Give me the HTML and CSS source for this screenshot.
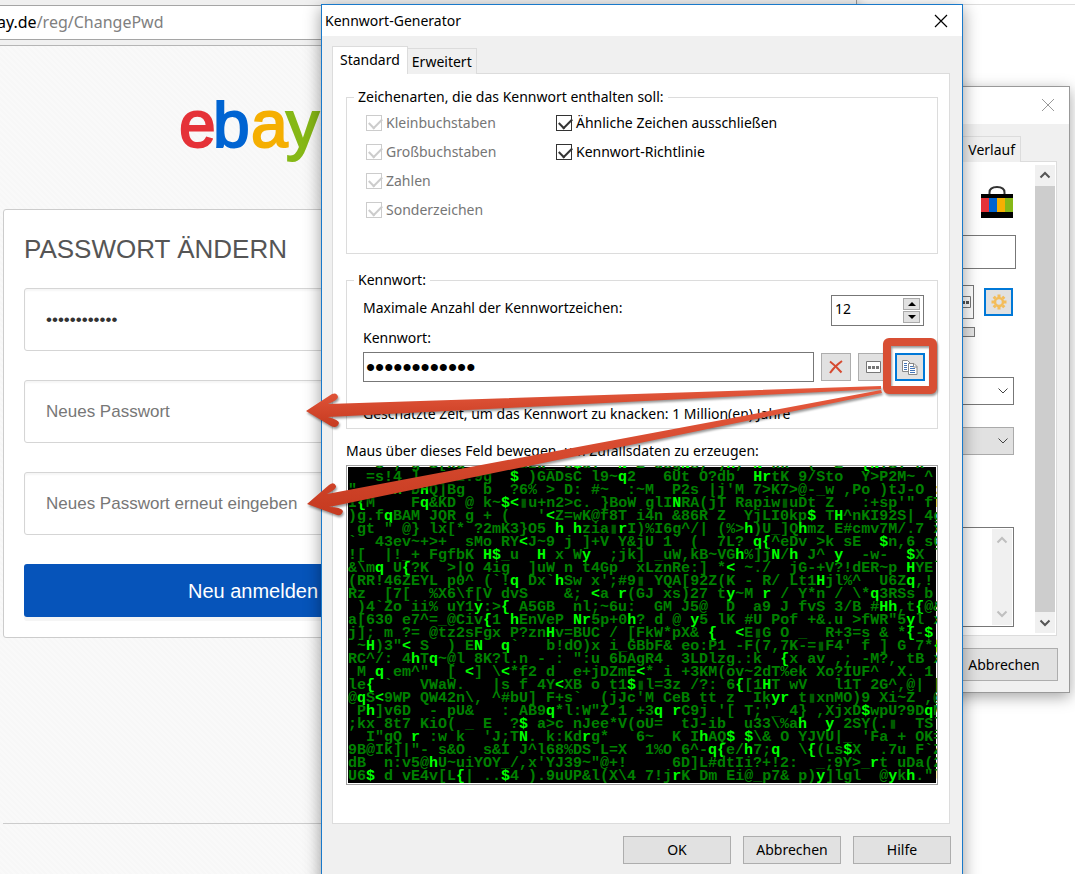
FILE: index.html
```html
<!DOCTYPE html>
<html lang="de">
<head>
    <meta charset="UTF-8">
    <meta name="viewport" content="width=device-width, initial-scale=1.0">
    <title>Kennwort-Generator</title>
    <link rel="stylesheet" href="styles.css">
</head>
<body>
    <!-- Browser -->
    <div class="browser">
        <div class="url-bar"><span class="url"><b>ay.de</b>/reg/ChangePwd</span></div>
        <div class="page">
            <svg class="logo" width="150" height="66" viewBox="0 0 150 66" role="img" aria-label="ebay">
                <text x="-1" y="47" fill="#e53238" stroke="#e53238">e</text>
                <text x="33" y="47" fill="#0064d2" stroke="#0064d2">b</text>
                <text x="71" y="47" fill="#f5af02" stroke="#f5af02">a</text>
                <text x="106" y="47" fill="#86b817" stroke="#86b817">y</text>
            </svg>
            <form class="card">
                <h1>PASSWORT ÄNDERN</h1>
                <input class="field" type="password" value="abcdefghijkl" aria-label="Aktuelles Passwort">
                <input class="field" type="password" placeholder="Neues Passwort" aria-label="Neues Passwort">
                <input class="field" type="password" placeholder="Neues Passwort erneut eingeben" aria-label="Neues Passwort erneut eingeben">
                <button class="submit" type="button">Neu anmelden</button>
            </form>
            <hr class="page-line">
        </div>
    </div>

    <!-- Eintrag bearbeiten -->
    <div class="window entry">
        <div class="entry-title">
            <button class="close" type="button" aria-label="Fenster schließen">
                <svg width="14" height="14" viewBox="0 0 14 14"><path d="M1 1l12 12M13 1L1 13" stroke="#999" fill="none"/></svg>
            </button>
        </div>
        <div class="entry-tabs"><button class="tab" type="button">Verlauf</button></div>
        <div class="entry-panel">
            <div class="entry-form">
                <svg class="bag" width="32" height="32" viewBox="0 0 32 32">
                    <path d="M8.500 9V6.500C8.500 2.500 11 1 16 1s7.500 1.500 7.500 5.500V9" fill="none" stroke="#333" stroke-width="2"/>
                    <path d="M0 8h32v24H0z"/>
                    <path d="M0 12h8v14H0z" fill="#e53238"/>
                    <path d="M8 12h8v14H8z" fill="#0064d2"/>
                    <path d="M16 12h8v14h-8z" fill="#f5af02"/>
                    <path d="M24 12h8v14h-8z" fill="#86b817"/>
                </svg>
                <input class="box" type="text" aria-label="Benutzername">
                <div class="pw-row">
                    <button class="pw-dots" type="button" aria-label="Kennwort anzeigen">
                        <svg width="15" height="12" viewBox="0 0 15 12"><path d="M.5.5h14v11H.5z" fill="#fff" stroke="#777"/><path d="M2 5h3v3H2zM6 5h3v3H6zM10 5h3v3h-3z" fill="#555"/></svg>
                    </button>
                    <button class="gear" type="button" aria-label="Generator">
                        <svg width="16" height="16" viewBox="-8 -8 16 16" stroke="#f3bd5a" fill="none">
                            <circle r="4" stroke-width="2.500"/>
                            <path stroke-width="3" d="M0-5v-2.500M0 5v2.500M-5 0h-2.500M5 0h2.500M3.600-3.600l1.700-1.700M-3.600-3.600l-1.700-1.700M3.600 3.600l1.700 1.700M-3.600 3.600l-1.700 1.700"/>
                        </svg>
                    </button>
                </div>
                <div class="quality"></div>
                <select class="drop" aria-label="Gruppe"><option></option></select>
                <select class="drop grey" aria-label="Ablauf"><option></option></select>
                <div class="note">
                    <textarea aria-label="Kommentar"></textarea>
                    <div class="note-bar">
                        <svg width="12" height="8" viewBox="0 0 12 8"><path d="M1.500 6.500L6 2l4.500 4.500" fill="none" stroke="#bfbfbf" stroke-width="2"/></svg>
                        <svg width="12" height="8" viewBox="0 0 12 8"><path d="M1.500 1.500L6 6l4.500-4.500" fill="none" stroke="#bfbfbf" stroke-width="2"/></svg>
                    </div>
                </div>
            </div>
            <div class="scrollbar">
                <svg width="12" height="8" viewBox="0 0 12 8"><path d="M1.500 6.500L6 2l4.500 4.500" fill="none" stroke="#555" stroke-width="2"/></svg>
                <div class="thumb"></div>
                <svg width="12" height="8" viewBox="0 0 12 8"><path d="M1.500 1.500L6 6l4.500-4.500" fill="none" stroke="#555" stroke-width="2"/></svg>
            </div>
        </div>
        <div class="entry-buttons"><button class="btn" type="button">Abbrechen</button></div>
    </div>

    <!-- Kennwort-Generator -->
    <div class="window dialog">
        <div class="dialog-title">
            <span>Kennwort-Generator</span>
            <button class="close" type="button" aria-label="Schließen">
                <svg width="14" height="14" viewBox="0 0 14 14"><path d="M1 1l12 12M13 1L1 13" stroke="#000" stroke-width="1.200" fill="none"/></svg>
            </button>
        </div>
        <div class="tabs">
            <button class="tab active" type="button">Standard</button>
            <button class="tab" type="button">Erweitert</button>
        </div>
        <div class="panel">
            <fieldset class="kinds">
                <legend>Zeichenarten, die das Kennwort enthalten soll:</legend>
                <div class="checks">
                    <label class="off"><input type="checkbox" checked disabled>Kleinbuchstaben</label>
                    <label><input type="checkbox" checked>Ähnliche Zeichen ausschließen</label>
                    <label class="off"><input type="checkbox" checked disabled>Großbuchstaben</label>
                    <label><input type="checkbox" checked>Kennwort-Richtlinie</label>
                    <label class="off"><input type="checkbox" checked disabled>Zahlen</label>
                    <span></span>
                    <label class="off"><input type="checkbox" checked disabled>Sonderzeichen</label>
                </div>
            </fieldset>

            <fieldset class="password">
                <legend>Kennwort:</legend>
                <div class="count-row">
                    <label for="count">Maximale Anzahl der Kennwortzeichen:</label>
                    <div class="spinner">
                        <input type="text" id="count" value="12">
                        <div class="spin-buttons">
                            <button type="button" aria-label="Mehr"><svg width="8" height="4" viewBox="0 0 8 4"><path d="M0 4l4-4 4 4z"/></svg></button>
                            <button type="button" aria-label="Weniger"><svg width="8" height="4" viewBox="0 0 8 4"><path d="M0 0l4 4 4-4z"/></svg></button>
                        </div>
                    </div>
                </div>
                <label class="pw-label" for="pw">Kennwort:</label>
                <div class="pw-line">
                    <input type="password" id="pw" value="abcdefghijkl">
                    <button class="tool" type="button" aria-label="Löschen">
                        <svg width="16" height="14" viewBox="0 0 16 14"><path d="M2 1.500c4 3 8 7 11.500 11M14 1C9 4.500 5 8.500 2 13" fill="none" stroke="#d64a30" stroke-width="2"/></svg>
                    </button>
                    <button class="tool" type="button" aria-label="Anzeigen">
                        <svg width="15" height="12" viewBox="0 0 15 12"><path d="M.5.5h14v11H.5z" fill="#fff" stroke="#777"/><path d="M2 5h3v3H2zM6 5h3v3H6zM10 5h3v3h-3z" fill="#777"/></svg>
                    </button>
                    <button class="tool copy" type="button" aria-label="Kopieren">
                        <svg width="16" height="15" viewBox="0 0 16 15">
                            <path d="M.5.5h5l3 3v8h-8z" fill="#fff" stroke="#888"/>
                            <path d="M2 3.500h3M2 5.500h3M2 7.500h3M2 9.500h3" stroke="#4475b8"/>
                            <path d="M6.500 3.500h5.500l3 3v8H6.500z" fill="#fff" stroke="#888"/>
                            <path d="M11.500 3.500v3.500H15" fill="none" stroke="#888"/>
                            <path d="M8 6.500h3M8 8.500h5M8 10.500h5M8 12.500h5" stroke="#4475b8"/>
                        </svg>
                    </button>
                </div>
                <p class="crack">Geschätzte Zeit, um das Kennwort zu knacken: 1 Million(en) Jahre</p>
            </fieldset>

            <p class="mouse">Maus über dieses Feld bewegen, um Zufallsdaten zu erzeugen:</p>
            <div class="matrix"><pre id="matrix">
   3 ; g S[xg      uzW_ s$u.  N Z degNs, )h, N kk  (  Z  {NTST k
  =s!4 ]   GZ.9g  $ )GADsC l9~q2   6Ut O?db  HrtK 9/Sto  Y>P2M~ ^
"    h DHQ]Bg  b  ?6% > D: #~  :~M  P2s |j'M 7>K7>@-_w ,Po )tJ-O :
I{M    Fq&amp;KD @ k~$&lt;▮u+n2>c. }BoW glINRA(jT Rapiw▮uDt Z   :+sp'" fT
)g.fqBAM JQR g + (   '&lt;Z=wK@f8T i4n &amp;86R Z  YjLI0kp$ TH^nKI92S| 4g
 gt " @} lx[* ?2mK3}O5 h hzia▮rI)%I6g^/| (%>h)U_]Qhmz E#cmv7M/.7 x
`  43ev~+>+  sMo RY&lt;J~9 j ]+V Y&amp;jU 1` (  7L? q{^eDv >k sE  $n,6 s0
![  |!_+ FgfbK H$_u  H x Wy  ;jk] _uW,kB~VGh%]jN/h J^ y  -w-  $X ]
&amp;\mq U{?K  >|O 4ig  ]uW n t4Gp  xLznRe:] *&lt; ~./  jG-+V?!dER~p HYE
(RR!46ZEYL p0^ (`!q Dx`hSw x';#9▮ YQA[92Z(K - R/ Lt1Hjl%^  U6Zq,!
Rz  [7[  %X6\f[V dvS    &amp;; &lt;a r(GJ xs)27 ty~M r / Y*n / \*q3RSs b
 )4`Zo ii% uY1y:>{ A5GB  nl;~6u:  GM J5@  D  a9 J fvS 3/B #Hh,t{@&amp;
a[630 e7^=_@Civ{1 hEnVeP Nr5p+0h? d @ y5 lK #U Pof +&amp;.u >fWR"5yl x
j]; m ?= @tz2sFgx P?znHv=BUC / [FkW*pX&amp; {  &lt;E▮G O _  R+3=s &amp; *{-$
 ~H)3"&lt; S  ) EN  q`   b!dO)x i_GBbF&amp; eo:P1 -F(7,7K-=▮F4' f ] G 7*{
RC^/: 4hTq~@l 8K?l.n - : ":u 6bAgR4  3LDlzg.:k  {x av ,; -M?, tB x
 M q em^"  [ &lt;] \&lt;*f2 d  e+jDZmE&lt;* i +3KM(ov~2dT%ek Xo?IUF^  X. 1
le{ `   VWaW.   |s f 4Y&lt;XB o t1$▮l=3z /?: 6{[1HT wV   l1T 2G^,@| [
@qS&lt;9WP QW42n\, ^#bU] F+s`  (jJc'M CeB tt z  Ikyr t▮xnMO)9 Xi~Z ,@
 Ph]v6D  - pU&amp;   : AB9q*l:W"Z 1 +3q rC9j '[ T;'_ 4} ,XjxD$wpU?9DqM
;kx 8t7 KiO( _ E  ?$ a>c nJee*V(oU=  tJ-ib  u33\%ah  y 2SY(.▮  TS]
  I"gQ r :w k  'J;TN. k:Kdrg*   6~  K IhAQ$ $\&amp; O YJVU|_ 'Fa + OK=
9B@Ik]|"- s&amp;O  s&amp;I J^l68%DS L=X  1%O 6^-q{e/h7;q  \{(Ls$X  .7u F`Z
dB  n:v5@hU~uiYOY_/,x'YJ39~"@+!     6D]L#dtIi?+!2:  _;9Y>_rt uDa(2
U6$ d vE4v[L{| ..$4 ).9uUP&amp;l(X\4 7!jrK Dm Ei@_p7&amp; p)y]lgl  @ykh."l</pre></div>
        </div>
        <div class="dialog-buttons">
            <button class="btn" type="button">OK</button>
            <button class="btn narrow" type="button">Abbrechen</button>
            <button class="btn narrow" type="button">Hilfe</button>
        </div>
    </div>

    <!-- Markierung und Pfeile -->
    <svg class="marks" width="660" height="240" viewBox="300 320 660 240">
        <defs>
            <linearGradient id="red" x1="0" y1="0" x2="0" y2="1">
                <stop offset="0" stop-color="#e5593d"/>
                <stop offset="1" stop-color="#c63a20"/>
            </linearGradient>
        </defs>
        <g class="mark-shadow">
            <path fill="url(#red)" d="M306 411L332 394Q337 392 338 397Q338 400 328 404L881 386V389L328 417Q339 420 339 423Q337 429 331 426Z"/>
            <path fill="url(#red)" d="M307 504L329 485Q334 481 336 486Q337 489 327 494L881 390L882 393L329 507Q341 507 343 511Q342 516 337 515Z"/>
            <rect x="887" y="342" width="46" height="48" rx="2" fill="none" stroke="#d84f34" stroke-width="8"/>
        </g>
    </svg>

    <script>
        // helle Zeichen im Zufallsfeld hervorheben
        const matrix = document.getElementById('matrix');
        const escapeChar = c => c === '<' ? '&lt;' : c === '&' ? '&amp;' : c;
        matrix.innerHTML = matrix.textContent.split('').map(c => {
            if ('hHq${<Nry'.includes(c)) return '<b>' + escapeChar(c) + '</b>';
            if (c === '▮') return '<i>' + c + '</i>';
            return escapeChar(c);
        }).join('');
    </script>
</body>
</html>
```

FILE: styles.css
```css
* {
    box-sizing: border-box;
    margin: 0;
    padding: 0;
}

body {
    position: relative;
    height: 100vh;
    overflow: hidden;
    background: linear-gradient(#fff 4px, #ddd 4px, #ddd 5px, #fff 5px);
    font-family: "Noto Sans", "Open Sans", sans-serif;
    font-size: 14px;
    line-height: 20px;
    color: #000;
}

button, input, select, textarea {
    font: inherit;
    color: inherit;
    outline: none;
}

svg {
    display: block;
    flex: none;
}

/* Browser */
.browser {
    position: absolute;
    top: 0;
    bottom: 0;
    left: 0;
    width: 857px;
    padding-top: 5px;
    background: #f0f0f0;
    border-right: 1px solid #999;
    box-shadow: 0 0 12px rgba(0, 0, 0, 0.3);
}

.url-bar {
    height: 35px;
    background: #fff;
    border-top: 1px solid #a5a5a5;
    border-bottom: 1px solid #a5a5a5;
    font-size: 16px;
    line-height: 33px;
    color: #808080;
}

.url {
    margin-left: -3px;
}

.url b {
    font-weight: normal;
    color: #000;
}

.page {
    height: 100%;
    margin-top: 5px;
    padding: 54px 3px 0;
    border-top: 1px solid #b5b5b5;
    background: #f8f8f8 repeating-linear-gradient(45deg, #f7f7f7 0, #f7f7f7 2px, #f9f9f9 2px, #f9f9f9 4px);
    font-family: "Liberation Sans", Arial, sans-serif;
}

.logo {
    margin: 0 0 43px 177px;
    font-size: 66px;
    stroke-width: 2;
}

.card {
    display: flex;
    flex-direction: column;
    width: 500px;
    padding: 24px 20px 20px;
    background: #fff;
    border: 1px solid #ccc;
    border-radius: 3px;
}

.card h1 {
    margin-bottom: 24px;
    font-size: 26px;
    line-height: 30px;
    font-weight: normal;
    color: #555;
}

.field {
    height: 63px;
    margin-bottom: 29px;
    padding: 0 21px;
    background: #fff;
    border: 1px solid #d5d5d5;
    border-radius: 3px;
    box-shadow: inset 0 2px 2px rgba(0, 0, 0, 0.04);
    font-size: 17px;
    color: #333;
}

.field::placeholder {
    color: #777;
}

.submit {
    height: 53px;
    border: 0;
    border-radius: 3px;
    background: #0654ba;
    box-shadow: 0 4px 0 #f5f5f5;
    font-size: 20px;
    color: #fff;
}

.page-line {
    margin-top: 185px;
    border: 0;
    border-top: 1px solid #ccc;
}

/* Fenster */
.window {
    position: absolute;
    background: #f0f0f0;
}

.close {
    border: 0;
    background: none;
}

.tab {
    border: 1px solid #dcdcdc;
    border-bottom: 0;
    background: #f0f0f0;
}

.btn {
    width: 108px;
    height: 28px;
    border: 1px solid #adadad;
    background: #e1e1e1;
}

.btn.narrow {
    width: 98px;
}

/* Eintrag */
.entry {
    top: 86px;
    left: 600px;
    width: 470px;
    border: 1px solid #999;
    box-shadow: 0 4px 14px rgba(0, 0, 0, 0.35);
}

.entry-title {
    display: flex;
    justify-content: flex-end;
    padding: 11px 14px 12px;
    background: #fff;
}

.entry-tabs {
    display: flex;
    justify-content: flex-end;
    padding: 12px 48px 0 0;
}

.entry-tabs .tab {
    height: 26px;
    padding: 0 5px;
}

.entry-panel {
    display: flex;
    justify-content: space-between;
    height: 475px;
    margin: -1px 12px 12px 8px;
    padding: 0 1px 0 10px;
    border: 1px solid #dcdcdc;
    background: #fff;
}

.entry-form {
    display: flex;
    flex-direction: column;
    width: 396px;
    padding-top: 24px;
}

.bag {
    margin: 0 3px 17px auto;
}

.box {
    height: 34px;
    margin-bottom: 16px;
    border: 1px solid #777;
}

.pw-row {
    display: flex;
    justify-content: flex-end;
    align-items: center;
    gap: 10px;
    padding-right: 3px;
}

.pw-dots {
    display: flex;
    align-items: center;
    justify-content: flex-end;
    width: 40px;
    height: 34px;
    padding-right: 2px;
    border: 1px solid #777;
    background: #fff;
}

.gear {
    display: flex;
    align-items: center;
    justify-content: center;
    width: 29px;
    height: 28px;
    border: 2px solid #0078d7;
    background: #e1e1e1;
}

.quality {
    height: 10px;
    margin: 8px 41px 40px 0;
    border: 1px solid #777;
    background: #e6e6e6;
}

.drop {
    appearance: none;
    height: 28px;
    margin: 0 2px 22px 0;
    border: 1px solid #777;
    border-radius: 0;
    background: #fff url('data:image/svg+xml,<svg xmlns="http://www.w3.org/2000/svg" width="10" height="6"><path d="M.5.5L5 5 9.500.5" fill="none" stroke="%23444"/></svg>') no-repeat right 5px center;
}

.drop.grey {
    margin-bottom: 72px;
    border-color: #aaa;
    background-color: #e1e1e1;
}

.note {
    display: flex;
    height: 100px;
    margin-right: 2px;
    padding: 1px;
    border: 1px solid #777;
}

.note textarea {
    flex: 1;
    border: 0;
    resize: none;
}

.note-bar {
    display: flex;
    flex-direction: column;
    align-items: center;
    justify-content: space-between;
    width: 20px;
    padding: 7px 0;
    background: #f0f0f0;
}

.scrollbar {
    display: flex;
    flex-direction: column;
    align-items: center;
    gap: 7px;
    width: 20px;
    margin: 3px 0 2px;
    padding: 6px 0;
    background: #f0f0f0;
}

.thumb {
    flex: 1;
    width: 100%;
    background: #cdcdcd;
}

.entry-buttons {
    display: flex;
    justify-content: flex-end;
    padding: 0 11px 11px 0;
}

.entry-buttons .btn {
    height: 33px;
}

/* Generator */
.dialog {
    top: 4px;
    left: 321px;
    width: 642px;
    height: 900px;
    border: 1px solid #1979ca;
    box-shadow: 0 4px 16px rgba(0, 0, 0, 0.4);
}

.dialog-title {
    display: flex;
    align-items: center;
    justify-content: space-between;
    height: 31px;
    padding: 0 14px 0 3px;
    background: #fff;
}

.tabs {
    display: flex;
    align-items: flex-end;
    height: 38px;
    padding-left: 10px;
}

.tabs .tab {
    height: 26px;
    padding: 0 4px;
    border-left: 0;
}

.tabs .tab.active {
    z-index: 1;
    height: 28px;
    padding: 0 7px 2px;
    border-left: 1px solid #dcdcdc;
    background: #fff;
}

.panel {
    height: 751px;
    margin: -1px 12px 12px 10px;
    padding: 13px 11px 0 13px;
    border: 1px solid #dcdcdc;
    background: #fff;
}

fieldset {
    border: 1px solid #dcdcdc;
}

legend {
    padding: 0 4px;
}

.kinds {
    margin-bottom: 16px;
    padding: 1px 7px 29px;
}

.checks {
    display: grid;
    grid-template-columns: 190px 1fr;
    grid-auto-rows: 29px;
    padding-left: 12px;
}

.checks label {
    display: flex;
    align-items: center;
    gap: 4px;
}

.checks .off {
    color: #767676;
}

.checks input {
    appearance: none;
    width: 16px;
    height: 16px;
    border: 1px solid #333;
    background: #fff;
}

.checks input::after {
    content: "";
    display: block;
    width: 11px;
    height: 6px;
    margin: 2px 0 0 2px;
    border: solid #333;
    border-width: 0 0 2px 2px;
    transform: rotate(-45deg);
}

.checks .off input,
.checks .off input::after {
    border-color: #ccc;
}

.password {
    padding: 5px 12px 4px 16px;
}

.password legend {
    margin-left: -9px;
}

.count-row {
    display: flex;
    justify-content: space-between;
    height: 33px;
    line-height: 26px;
}

.spinner {
    display: flex;
    width: 93px;
    height: 31px;
    padding: 2px 3px;
    border: 1px solid #777;
    margin-right: 1px;
}

.spinner input {
    flex: 1;
    min-width: 0;
    height: 22px;
    border: 0;
}

.spin-buttons {
    display: flex;
    flex-direction: column;
    gap: 1px;
}

.spin-buttons button {
    display: flex;
    align-items: center;
    justify-content: center;
    width: 17px;
    height: 12px;
    border: 1px solid #aaa;
    background: #e1e1e1;
}

.pw-label {
    display: block;
    height: 24px;
}

.pw-line {
    display: flex;
    align-items: center;
    gap: 7px;
}

.pw-line input {
    flex: 1;
    min-width: 0;
    height: 30px;
    padding: 0 2px;
    border: 1px solid #777;
    font-family: "Liberation Sans", Arial, sans-serif;
    font-size: 26px;
}

.tool {
    display: flex;
    align-items: center;
    justify-content: center;
    width: 30px;
    height: 28px;
    border: 1px solid #adadad;
    background: #e1e1e1;
}

.copy {
    border: 2px solid #0078d7;
}

.crack {
    margin-top: 22px;
}

.mouse {
    margin: 12px 0 4px;
}

.matrix {
    display: flex;
    align-items: flex-end;
    height: 320px;
    padding: 1px;
    overflow: hidden;
    border: 1px solid #a0a0a0;
    background: #000 content-box;
}

.matrix pre {
    font-family: "Liberation Mono", "Courier New", monospace;
    font-size: 15px;
    line-height: 13px;
    font-weight: bold;
    color: #008000;
}

.matrix b {
    color: #0f0;
}

.matrix i {
    font-style: normal;
    color: #005a00;
}

.dialog-buttons {
    display: flex;
    justify-content: flex-end;
    gap: 12px;
    padding-right: 11px;
}

.marks {
    position: absolute;
    top: 320px;
    left: 300px;
    pointer-events: none;
}

.mark-shadow {
    filter: drop-shadow(1px 2px 1px rgba(0, 0, 0, 0.4));
}
```
